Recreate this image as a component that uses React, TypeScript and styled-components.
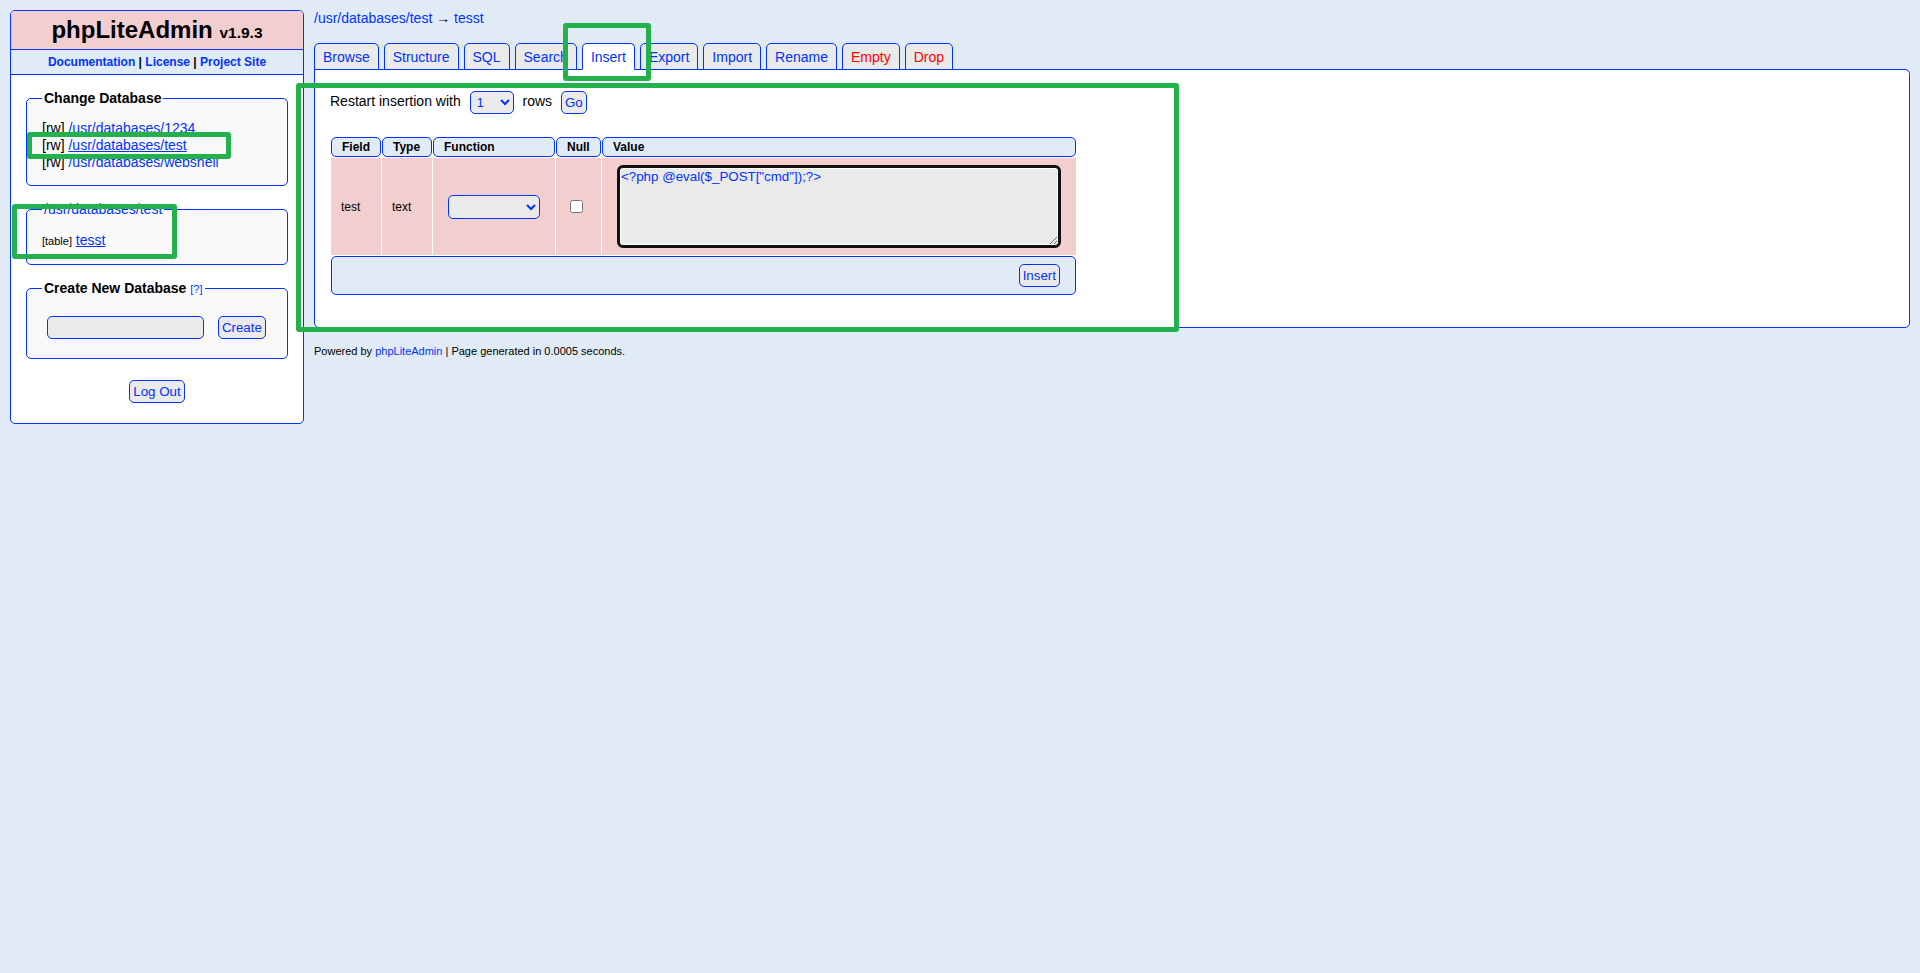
import React from "react";
import styled, { createGlobalStyle, css } from "styled-components";

const BLUE = "#0033ff";

const GlobalStyle = createGlobalStyle`
  html, body {
    margin: 0;
    padding: 0;
  }
  body {
    background: #e0ebf6;
    color: #000;
    font-family: "Liberation Sans", Arial, sans-serif;
    font-size: 14px;
  }
`;

const Page = styled.div`
  position: relative;
  display: flex;
  align-items: flex-start;
  gap: 10px;
  padding: 10px;
`;

const Link = styled.a<{ $active?: boolean }>`
  color: ${BLUE};
  text-decoration: ${(p) => (p.$active ? "underline" : "none")};
  cursor: pointer;
`;

const fieldBase = css`
  font-family: "Liberation Sans", Arial, sans-serif;
  font-size: 13.333px;
  line-height: 15px;
  color: ${BLUE};
  background: #eaeaea;
  border: 1px solid ${BLUE};
  border-radius: 5px;
  margin: 5px;
  box-sizing: border-box;
  vertical-align: middle;
`;

const Button = styled.button`
  ${fieldBase};
  padding: 3px;
  cursor: pointer;
`;

const TextInput = styled.input`
  ${fieldBase};
  width: 157px;
  height: 23px;
  padding: 3px;
`;

const Select = styled.select<{ $w: number; $h: number }>`
  ${fieldBase};
  width: ${(p) => p.$w}px;
  height: ${(p) => p.$h}px;
  padding: 0 2px;
`;

/* ---------- sidebar ---------- */

const Sidebar = styled.div`
  flex: none;
  width: 294px;
  box-sizing: border-box;
  border: 1px solid ${BLUE};
  border-radius: 5px;
  background: #fff;
  padding-bottom: 15px;
`;

const Title = styled.h1`
  margin: 0;
  padding: 5px;
  background: #f3cece;
  border-radius: 4px 4px 0 0;
  text-align: center;
  font-size: 24px;
  font-weight: bold;
`;

const Version = styled.span`
  font-size: 15.5px;
`;

const LinkBand = styled.div`
  border-top: 1px solid ${BLUE};
  border-bottom: 1px solid ${BLUE};
  background: #e0ebf6;
  padding: 5px;
  line-height: 14px;
  text-align: center;
  font-size: 12px;
  font-weight: bold;
`;

const Fieldset = styled.fieldset`
  margin: 15px 15px 0;
  padding: 15px;
  border: 1px solid ${BLUE};
  border-radius: 5px;
  background: #f9f9f9;
  min-width: 0;
`;

const Legend = styled.legend<{ $plain?: boolean }>`
  padding: 0 2px;
  line-height: 16px;
  height: 16px;
  font-weight: ${(p) => (p.$plain ? "normal" : "bold")};
`;

const Hint = styled.span`
  font-size: 11px;
  line-height: 1;
  font-weight: normal;
`;

const DbList = styled.div`
  margin: -1px 0 -1px;
  line-height: 17px;
`;

const TableLine = styled.div`
  line-height: 16px;
`;

const Small = styled.span`
  font-size: 11px;
`;

const CreateRow = styled.div`
  margin-top: -1px;
  line-height: 33px;
  height: 33px;
`;

const LogoutRow = styled.div`
  margin-top: 16px;
  text-align: center;
`;

/* ---------- content ---------- */

const Content = styled.div`
  flex: 1;
  min-width: 0;
`;

const Crumb = styled.div`
  line-height: 16px;
  margin-bottom: 17px;
`;

const Tabs = styled.div`
  position: relative;
  z-index: 1;
  display: flex;
  margin-bottom: -1px;
`;

const Tab = styled.a<{ $active?: boolean; $danger?: boolean }>`
  display: block;
  margin-right: 5px;
  padding: 5px 8px 4px;
  line-height: 16px;
  border: 1px solid ${BLUE};
  border-radius: 5px 5px 0 0;
  background: ${(p) => (p.$active ? "#fff" : "#eaeaea")};
  color: ${(p) => (p.$danger ? "#ff0000" : BLUE)};
  ${(p) =>
    p.$active &&
    css`
      border-bottom-color: #fff;
    `}
`;

const Main = styled.div`
  border: 1px solid ${BLUE};
  border-radius: 0 5px 5px 5px;
  background: #fff;
  padding: 15px;
`;

const RestartLine = styled.div`
  line-height: 33px;
  height: 33px;
`;

const InsertTable = styled.table`
  margin: 18px 0 16px;
  width: 747px;
  table-layout: fixed;
  border-collapse: separate;
  border-spacing: 1px;
`;

const HeadCell = styled.td`
  padding: 2px 10px;
  line-height: 14px;
  font-size: 12px;
  font-weight: bold;
  background: #e0ebf6;
  border: 1px solid ${BLUE};
  border-radius: 5px;
  text-align: left;
`;

const DataCell = styled.td`
  padding: 2px 10px;
  font-size: 12px;
  background: #f3cece;
  vertical-align: middle;
`;

const ValueBox = styled.textarea`
  display: block;
  width: calc(100% - 10px);
  height: 83px;
  margin: 5px;
  padding: 1px;
  box-sizing: border-box;
  font-family: "Liberation Sans", Arial, sans-serif;
  font-size: 13.333px;
  line-height: 15px;
  color: ${BLUE};
  background: #eaeaea;
  border: 3px solid #111;
  border-radius: 6px;
  box-shadow: inset 0 0 0 1px #fff;
  outline: none;
`;

const Check = styled.input`
  margin: 3px 3px 3px 4px;
  vertical-align: middle;
`;

const FootCell = styled.td`
  padding: 2px 10px;
  background: #e0ebf6;
  border: 1px solid ${BLUE};
  border-radius: 5px;
  text-align: right;
`;

const PoweredBy = styled.div`
  margin-top: 17px;
  font-size: 11px;
  line-height: 13px;
`;

/* ---------- annotation marks ---------- */

const Mark = styled.div<{ $x: number; $y: number; $w: number; $h: number }>`
  position: absolute;
  left: ${(p) => p.$x}px;
  top: ${(p) => p.$y}px;
  width: ${(p) => p.$w}px;
  height: ${(p) => p.$h}px;
  box-sizing: border-box;
  border: 5px solid #22b14c;
  border-radius: 3px;
  pointer-events: none;
  z-index: 10;
`;

const tabs = [
  { label: "Browse" },
  { label: "Structure" },
  { label: "SQL" },
  { label: "Search" },
  { label: "Insert", active: true },
  { label: "Export" },
  { label: "Import" },
  { label: "Rename" },
  { label: "Empty", danger: true },
  { label: "Drop", danger: true },
];

const databases = [
  "/usr/databases/1234",
  "/usr/databases/test",
  "/usr/databases/webshell",
];

export default function App() {
  return (
    <>
      <GlobalStyle />
      <Page>
        <Sidebar>
          <Title>
            phpLiteAdmin <Version>v1.9.3</Version>
          </Title>
          <LinkBand>
            <Link>Documentation</Link> | <Link>License</Link> |{" "}
            <Link>Project Site</Link>
          </LinkBand>

          <Fieldset>
            <Legend>Change Database</Legend>
            <DbList>
              {databases.map((db) => (
                <div key={db}>
                  [rw]{" "}
                  <Link $active={db === "/usr/databases/test"}>{db}</Link>
                </div>
              ))}
            </DbList>
          </Fieldset>

          <Fieldset>
            <Legend $plain>
              <Link>/usr/databases/test</Link>
            </Legend>
            <TableLine>
              <Small>[table]</Small> <Link $active>tesst</Link>
            </TableLine>
          </Fieldset>

          <Fieldset>
            <Legend>
              Create New Database{" "}
              <Hint>
                <Link>[?]</Link>
              </Hint>
            </Legend>
            <CreateRow>
              <TextInput type="text" /> <Button>Create</Button>
            </CreateRow>
          </Fieldset>

          <LogoutRow>
            <Button>Log Out</Button>
          </LogoutRow>
        </Sidebar>

        <Content>
          <Crumb>
            <Link>/usr/databases/test</Link> → <Link>tesst</Link>
          </Crumb>
          <Tabs>
            {tabs.map((t) => (
              <Tab key={t.label} $active={t.active} $danger={t.danger}>
                {t.label}
              </Tab>
            ))}
          </Tabs>
          <Main>
            <RestartLine>
              Restart insertion with{" "}
              <Select $w={44} $h={23} defaultValue="1">
                <option value="1">1</option>
                <option value="2">2</option>
              </Select>{" "}
              rows <Button>Go</Button>
            </RestartLine>
            <InsertTable>
              <colgroup>
                <col style={{ width: 50 }} />
                <col style={{ width: 50 }} />
                <col style={{ width: 122 }} />
                <col style={{ width: 45 }} />
                <col />
              </colgroup>
              <tbody>
                <tr>
                  <HeadCell>Field</HeadCell>
                  <HeadCell>Type</HeadCell>
                  <HeadCell>Function</HeadCell>
                  <HeadCell>Null</HeadCell>
                  <HeadCell>Value</HeadCell>
                </tr>
                <tr>
                  <DataCell>test</DataCell>
                  <DataCell>text</DataCell>
                  <DataCell>
                    <Select $w={92} $h={24} defaultValue="">
                      <option value=""></option>
                    </Select>
                  </DataCell>
                  <DataCell>
                    <Check type="checkbox" />
                  </DataCell>
                  <DataCell>
                    <ValueBox defaultValue={'<?php @eval($_POST["cmd"]);?>'} />
                  </DataCell>
                </tr>
                <tr>
                  <FootCell colSpan={5}>
                    <Button>Insert</Button>
                  </FootCell>
                </tr>
              </tbody>
            </InsertTable>
          </Main>
          <PoweredBy>
            Powered by <Link>phpLiteAdmin</Link> | Page generated in 0.0005
            seconds.
          </PoweredBy>
        </Content>

        <Mark $x={27} $y={132} $w={204} $h={27} />
        <Mark $x={12} $y={204} $w={165} $h={55} />
        <Mark $x={563} $y={23} $w={88} $h={58} />
        <Mark $x={296} $y={83} $w={883} $h={249} />
      </Page>
    </>
  );
}
